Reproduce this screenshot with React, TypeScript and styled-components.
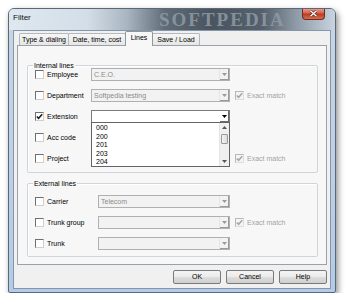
import React from 'react';
import styled, { createGlobalStyle } from 'styled-components';

const GlobalStyle = createGlobalStyle`
  html, body { margin: 0; padding: 0; background: #ffffff; }
  body {
    font-family: "Liberation Sans", Arial, sans-serif;
    font-size: 7px;
    color: #000000;
  }
  * { box-sizing: border-box; }
`;

// --- window chrome ---
const Window = styled.div`
  margin: 8px 0 0 8px;
  width: 328px;
  height: 285px;
  border: 1px solid #5a6878;
  border-radius: 6px 6px 2px 2px;
  background: linear-gradient(180deg, #c7d6e6 0%, #bccfe4 60%, #b3cbe8 100%);
  padding: 0 4px 3px 4px;
  display: flex;
  flex-direction: column;
  box-shadow: 2px 3px 6px rgba(0, 0, 0, 0.45);
`;

const TitleBar = styled.div`
  position: relative;
  height: 21px;
  margin: 0 -4px;
  padding: 0 10px 0 4px;
  display: flex;
  align-items: flex-start;
  overflow: hidden;
  border-radius: 5px 5px 0 0;
  background: linear-gradient(90deg, #dfe8f0 0%, #d3dee8 24%, #aab6c1 36%, #5f6b76 48%, #4a5560 62%, #56616c 78%, #8e9aa5 88%, #c8d4df 100%);
`;

const Title = styled.span`
  position: relative;
  z-index: 1;
  padding-top: 3px;
  line-height: 12px;
  font-size: 8px;
  color: #111;
`;

const TitleWatermark = styled.span`
  position: absolute;
  left: 150px;
  top: 0;
  line-height: 21px;
  font-family: "Liberation Serif", serif;
  font-weight: bold;
  font-size: 19px;
  letter-spacing: 2px;
  color: #8f9ba6;
  opacity: 0.85;
`;

const CloseButton = styled.div`
  position: relative;
  z-index: 1;
  margin-left: auto;
  margin-top: -1px;
  width: 23px;
  height: 12px;
  border: 1px solid #6f2c22;
  border-top: none;
  border-radius: 0 0 4px 4px;
  background: linear-gradient(180deg, #eaa898 0%, #d7634d 45%, #c0381f 55%, #d2704f 100%);
  display: flex;
  align-items: center;
  justify-content: center;
`;

const Client = styled.div`
  flex: 1;
  background: #f0f0f0;
  border: 1px solid #8696a8;
  display: flex;
  flex-direction: column;
  padding: 2px 3px 4px 3px;
`;

// --- tabs ---
const Tabs = styled.div`
  display: flex;
  align-items: flex-start;
  height: 13px;
  margin-bottom: -1px;
  padding-left: 2px;
  position: relative;
  z-index: 2;
`;

const Tab = styled.div<{ $w: number; $active?: boolean }>`
  width: ${p => p.$w}px;
  height: ${p => (p.$active ? 15 : 12)}px;
  margin-top: ${p => (p.$active ? -2 : 0)}px;
  margin-right: -1px;
  border: 1px solid ${p => (p.$active ? '#8e969e' : '#b3b8bd')};
  border-bottom: none;
  border-radius: 2px 2px 0 0;
  background: ${p => (p.$active ? '#f7f7f7' : 'linear-gradient(180deg, #f6f6f6, #e6e6e6)')};
  text-align: center;
  line-height: ${p => (p.$active ? 12 : 11)}px;
  white-space: nowrap;
  position: relative;
  z-index: ${p => (p.$active ? 1 : 0)};
`;

const Panel = styled.div`
  height: 220px;
  border: 1px solid #9aa1a8;
  background: #f7f7f7;
  padding: 19px 8px 7px 9px;
  display: flex;
  flex-direction: column;
  gap: 10px;
`;

// --- group boxes ---
const Group = styled.div<{ $pad: string }>`
  position: relative;
  border: 1px solid #d0d5da;
  border-radius: 2px;
  box-shadow: inset 1px 1px 0 #ffffff;
  padding: ${p => p.$pad};
  display: flex;
  flex-direction: column;
  gap: 8px;
`;

const GroupTitle = styled.span`
  position: absolute;
  top: -5px;
  left: 5px;
  padding: 0 1px;
  line-height: 9px;
  background: #f7f7f7;
`;

const Row = styled.div`
  display: flex;
  align-items: center;
  height: 13px;
`;

const CheckBox = styled.span<{ $disabled?: boolean }>`
  width: 9px;
  height: 9px;
  flex-shrink: 0;
  border: 1px solid;
  border-color: ${p => (p.$disabled ? '#b8b8b8 #dedede #dedede #b8b8b8' : '#6f6f6f #cfcfcf #cfcfcf #6f6f6f')};
  background: ${p => (p.$disabled ? '#f4f4f4' : '#ffffff')};
  display: flex;
  align-items: center;
  justify-content: center;
`;

const Label = styled.span<{ $w?: number; $disabled?: boolean }>`
  width: ${p => (p.$w ? `${p.$w}px` : 'auto')};
  margin-left: 3px;
  flex-shrink: 0;
  white-space: nowrap;
  color: ${p => (p.$disabled ? '#a3a3a3' : '#000')};
`;

const Combo = styled.div<{ $w: number; $enabled?: boolean }>`
  position: relative;
  width: ${p => p.$w}px;
  height: 13px;
  flex-shrink: 0;
  display: flex;
  border: 1px solid ${p => (p.$enabled ? '#7b7b7b' : '#b0b0b0')};
  background: ${p => (p.$enabled ? '#ffffff' : '#f2f2f2')};
`;

const ComboText = styled.span<{ $muted?: boolean }>`
  flex: 1;
  padding-left: 2px;
  line-height: 11px;
  white-space: nowrap;
  overflow: hidden;
  color: ${p => (p.$muted ? '#8a8a8a' : '#000')};
`;

const ComboButton = styled.span<{ $enabled?: boolean }>`
  width: 10px;
  height: 100%;
  display: flex;
  align-items: center;
  justify-content: center;
  border-left: 1px solid ${p => (p.$enabled ? '#ffffff' : '#e6e6e6')};
  box-shadow: inset -1px -1px 0 ${p => (p.$enabled ? '#6a6a6a' : '#9a9a9a')};
`;

const ExactWrap = styled.span`
  display: flex;
  align-items: center;
  margin-left: 5px;
`;

// --- dropdown list ---
const DropList = styled.div`
  position: absolute;
  z-index: 5;
  top: 100%;
  left: -1px;
  width: 139px;
  height: 45px;
  border: 1px solid #646464;
  background: #ffffff;
  display: flex;
`;

const Items = styled.div`
  flex: 1;
  padding: 1px 0 0 4px;
`;

const Item = styled.div`
  line-height: 8.5px;
  height: 8.5px;
`;

const ScrollBar = styled.div`
  width: 10px;
  display: flex;
  flex-direction: column;
  background: #f0f0f0;
  border-left: 1px solid #e4e4e4;
`;

const ScrollArrow = styled.div`
  height: 9px;
  display: flex;
  align-items: center;
  justify-content: center;
`;

const Track = styled.div`
  flex: 1;
  padding-top: 2px;
`;

const Thumb = styled.div`
  height: 10px;
  margin: 0 1px;
  border: 1px solid #9a9a9a;
  border-radius: 1px;
  background: linear-gradient(90deg, #f3f3f3, #dcdcdc);
`;

// --- buttons ---
const ButtonRow = styled.div`
  display: flex;
  justify-content: flex-end;
  gap: 5px;
  margin-top: 5px;
  height: 14px;
`;

const Button = styled.div`
  width: 48px;
  height: 14px;
  border: 1px solid #7a7a7a;
  border-radius: 2px;
  background: linear-gradient(180deg, #f4f4f4 0%, #ebebeb 50%, #dddddd 51%, #cfcfcf 100%);
  text-align: center;
  line-height: 12px;
`;

const Arrow = ({ dir = 'down', color = '#000' }: { dir?: 'down' | 'up'; color?: string }) => (
  <svg width="5" height="3" viewBox="0 0 5 3">
    <polygon points={dir === 'down' ? '0,0 5,0 2.5,3' : '0,3 5,3 2.5,0'} fill={color} />
  </svg>
);

const Tick = ({ color }: { color: string }) => (
  <svg width="7" height="7" viewBox="0 0 7 7">
    <path d="M0.8 3.4 L2.6 5.3 L6.2 1.2" fill="none" stroke={color} strokeWidth="1.5" />
  </svg>
);

const Check = ({ checked, disabled }: { checked?: boolean; disabled?: boolean }) => (
  <CheckBox $disabled={disabled}>{checked && <Tick color={disabled ? '#a5a5a5' : '#1a1a1a'} />}</CheckBox>
);

const ComboBox = ({ w, text, enabled, children }: { w: number; text?: string; enabled?: boolean; children?: React.ReactNode }) => (
  <Combo $w={w} $enabled={enabled}>
    <ComboText $muted={!enabled}>{text}</ComboText>
    <ComboButton $enabled={enabled}>
      <Arrow color={enabled ? '#000' : '#9a9a9a'} />
    </ComboButton>
    {children}
  </Combo>
);

const Exact = () => (
  <ExactWrap>
    <Check checked disabled />
    <Label $disabled>Exact match</Label>
  </ExactWrap>
);

export default function App() {
  return (
    <>
      <GlobalStyle />
      <Window>
        <TitleBar>
          <Title>Filter</Title>
          <TitleWatermark>SOFTPEDIA</TitleWatermark>
          <CloseButton>
            <svg width="9" height="7" viewBox="0 0 9 7">
              <path d="M1.5 0.8 L7.5 6.2 M7.5 0.8 L1.5 6.2" stroke="#5a1a10" strokeWidth="2.6" />
              <path d="M1.5 0.8 L7.5 6.2 M7.5 0.8 L1.5 6.2" stroke="#ffffff" strokeWidth="1.4" />
            </svg>
          </CloseButton>
        </TitleBar>
        <Client>
          <Tabs>
            <Tab $w={50}>Type &amp; dialing</Tab>
            <Tab $w={58}>Date, time, cost</Tab>
            <Tab $w={28} $active>Lines</Tab>
            <Tab $w={48}>Save / Load</Tab>
          </Tabs>
          <Panel>
            <Group $pad="2px 0 7px 7px">
              <GroupTitle>Internal lines</GroupTitle>
              <Row>
                <Check />
                <Label $w={44}>Employee</Label>
                <ComboBox w={139} text="C.E.O." />
              </Row>
              <Row>
                <Check />
                <Label $w={44}>Department</Label>
                <ComboBox w={139} text="Softpedia testing" />
                <Exact />
              </Row>
              <Row>
                <Check checked />
                <Label $w={44}>Extension</Label>
                <ComboBox w={139} enabled>
                  <DropList>
                    <Items>
                      {['000', '200', '201', '203', '204'].map(v => (
                        <Item key={v}>{v}</Item>
                      ))}
                    </Items>
                    <ScrollBar>
                      <ScrollArrow><Arrow dir="up" color="#555" /></ScrollArrow>
                      <Track><Thumb /></Track>
                      <ScrollArrow><Arrow color="#555" /></ScrollArrow>
                    </ScrollBar>
                  </DropList>
                </ComboBox>
              </Row>
              <Row>
                <Check />
                <Label $w={44}>Acc code</Label>
                <ComboBox w={139} />
              </Row>
              <Row>
                <Check />
                <Label $w={44}>Project</Label>
                <ComboBox w={139} />
                <Exact />
              </Row>
            </Group>
            <Group $pad="11px 0 6px 7px">
              <GroupTitle>External lines</GroupTitle>
              <Row>
                <Check />
                <Label $w={51}>Carrier</Label>
                <ComboBox w={132} text="Telecom" />
              </Row>
              <Row>
                <Check />
                <Label $w={51}>Trunk group</Label>
                <ComboBox w={132} />
                <Exact />
              </Row>
              <Row>
                <Check />
                <Label $w={51}>Trunk</Label>
                <ComboBox w={132} />
              </Row>
            </Group>
          </Panel>
          <ButtonRow>
            <Button>OK</Button>
            <Button>Cancel</Button>
            <Button>Help</Button>
          </ButtonRow>
        </Client>
      </Window>
    </>
  );
}
